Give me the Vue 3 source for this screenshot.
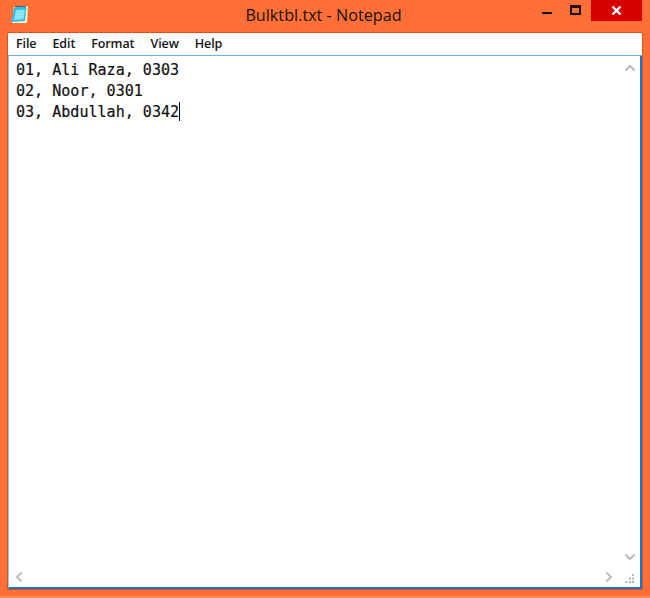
<script setup>
const menus = ['File', 'Edit', 'Format', 'View', 'Help']
const lines = ['01, Ali Raza, 0303', '02, Noor, 0301', '03, Abdullah, 0342']
</script>

<template>
  <div class="window">
    <header class="titlebar">
      <svg class="app-icon" width="18" height="18" viewBox="0 0 18 18">
        <path d="M3 1 L17 0 L16 17 L1 17 Z" fill="#fff3c8" />
        <path d="M3 2 L15.5 1.5 L14 15 L0.5 16 Z" fill="#22c4ea" />
        <path d="M5 4 L14 3.5 L12.5 13 L3 14 Z" fill="#8fe3f8" />
        <path d="M4 0 H15 V1.6 H4 Z" fill="#3a6f9a" />
      </svg>
      <h1 class="title">Bulktbl.txt - Notepad</h1>
      <div class="controls">
        <span class="ctl min"><i></i></span>
        <span class="ctl max"><i></i></span>
        <span class="close">
          <svg width="11" height="11" viewBox="0 0 11 11"><path d="M1.5 1.5 L9.5 9.5 M9.5 1.5 L1.5 9.5" stroke="#fff" stroke-width="2.4" /></svg>
        </span>
      </div>
    </header>
    <div class="client">
      <nav class="menubar">
        <span v-for="m in menus" :key="m" class="menu">{{ m }}</span>
      </nav>
      <div class="editor">
        <div class="text">
          <div v-for="(l, i) in lines" :key="i" class="line">{{ l }}<span v-if="i === 2" class="caret"></span></div>
        </div>
        <div class="vscroll">
          <svg width="12" height="8" viewBox="0 0 12 8"><path d="M1.5 6.5 L6 2 L10.5 6.5" class="chev" /></svg>
          <svg width="12" height="8" viewBox="0 0 12 8"><path d="M1.5 1.5 L6 6 L10.5 1.5" class="chev" /></svg>
        </div>
        <div class="hscroll">
          <svg width="8" height="12" viewBox="0 0 8 12"><path d="M6.5 1.5 L2 6 L6.5 10.5" class="chev" /></svg>
          <svg width="8" height="12" viewBox="0 0 8 12"><path d="M1.5 1.5 L6 6 L1.5 10.5" class="chev" /></svg>
        </div>
        <div class="grip">
          <svg width="10" height="10" viewBox="0 0 10 10" fill="#b4b4b4">
            <rect x="7" y="0" width="2" height="2" />
            <rect x="4" y="3.5" width="2" height="2" /><rect x="7" y="3.5" width="2" height="2" />
            <rect x="0.5" y="7" width="2" height="2" /><rect x="4" y="7" width="2" height="2" /><rect x="7" y="7" width="2" height="2" />
          </svg>
        </div>
      </div>
    </div>
  </div>
</template>

<style>
html, body { margin: 0; background: #ff7038; }
</style>

<style scoped>
.window {
  width: 650px;
  height: 598px;
  box-sizing: border-box;
  padding: 0 7px 6px 7px;
  display: flex;
  flex-direction: column;
  background: #ff7038;
  border-bottom: 2px solid #ff8a5c;
  overflow: hidden;
}
.titlebar {
  height: 32px;
  flex: none;
  display: grid;
  grid-template-columns: 1fr auto 1fr;
  align-items: start;
}
.app-icon {
  margin: 6px 0 0 4px;
}
.title {
  margin: 4px 3px 0 0;
  font: 400 16.2px/22px "Open Sans", sans-serif;
  color: #1c1008;
  white-space: nowrap;
}
.controls {
  justify-self: end;
  display: flex;
  align-items: flex-start;
  margin-right: 1px;
}
.ctl {
  width: 28px;
  height: 21px;
  display: block;
}
.min i {
  display: block;
  width: 10px;
  height: 2px;
  background: #1a1008;
  margin: 12px 0 0 14px;
}
.max { margin-left: 3px; margin-right: 4px; }
.max i {
  display: block;
  width: 7px;
  height: 5px;
  border: 2px solid #1a1008;
  border-top-width: 3px;
  margin: 5px 0 0 11px;
}
.close {
  width: 51px;
  height: 21px;
  background: #d80000;
  display: flex;
  align-items: center;
  justify-content: center;
}
.client {
  flex: 1;
  min-height: 0;
  display: flex;
  flex-direction: column;
  background: #fff;
  border: 1px solid #d4551f;
  border-top-left-radius: 2px;
  border-top-right-radius: 2px;
}
.menubar {
  height: 22px;
  flex: none;
  display: flex;
  align-items: center;
  gap: 16px;
  padding-left: 8px;
  font: 600 12.5px/22px "Open Sans", sans-serif;
  letter-spacing: -0.1px;
  color: #151515;
  border-bottom: 1px solid #66b0f2;
}
.editor {
  flex: 1;
  min-height: 0;
  display: grid;
  grid-template-columns: 1fr 17px;
  grid-template-rows: 1fr 17px;
  border-left: 1px solid #8cccf8;
  border-right: 2px solid #1273d6;
  border-bottom: 2px solid #1273d6;
}
.text {
  padding: 4px 0 0 7px;
  font: 15.05px/21px "DejaVu Sans Mono", "Liberation Mono", monospace;
  -webkit-text-stroke: 0.2px #101010;
  color: #101010;
}
.line {
  height: 21px;
  white-space: pre;
}
.caret {
  display: inline-block;
  width: 1px;
  height: 19px;
  background: #000;
  vertical-align: -4px;
}
.vscroll {
  display: flex;
  flex-direction: column;
  justify-content: space-between;
  align-items: center;
  padding: 8px 4px 9px 0;
}
.hscroll {
  display: flex;
  justify-content: space-between;
  align-items: center;
  padding: 0 10px 4px 6px;
}
.grip {
  display: flex;
  align-items: flex-end;
  justify-content: flex-end;
  padding: 0 5px 3px 0;
}
.chev {
  fill: none;
  stroke: #bcbcbc;
  stroke-width: 2;
}
</style>
